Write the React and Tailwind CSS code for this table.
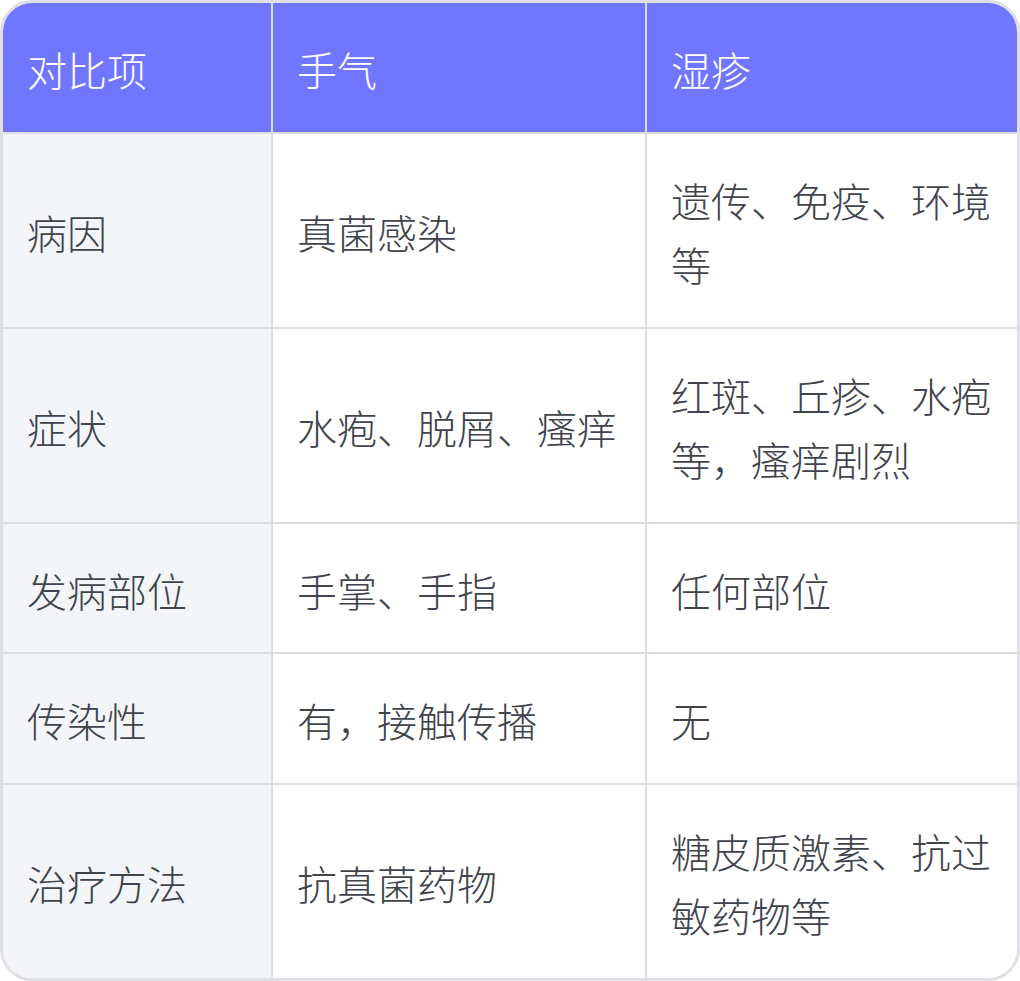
const headers = ['对比项', '手气', '湿疹']

const rows = [
    ['病因', '真菌感染', '遗传、免疫、环境等'],
    ['症状', '水疱、脱屑、瘙痒', '红斑、丘疹、水疱等，瘙痒剧烈'],
    ['发病部位', '手掌、手指', '任何部位'],
    ['传染性', '有，接触传播', '无'],
    ['治疗方法', '抗真菌药物', '糖皮质激素、抗过敏药物等']
]

const App = () => {
    return (
        <div
            className="w-[1020px] bg-white"
            style={{ fontFamily: '"Noto Sans CJK SC", "Noto Sans", sans-serif' }}
        >
            <div className="rounded-[32px] border-[3px] border-[#dfe0e5] overflow-hidden">
                <div className="grid grid-cols-[268px_372px_1fr] gap-[2px] bg-[#dcdde3] text-[40px] leading-[64.5px] font-light">
                    {headers.map((h) => (
                        <div key={h} className="bg-[#7076ff] text-white px-6 pt-[34px] pb-[30px] flex items-center">
                            {h}
                        </div>
                    ))}

                    {rows.map((row) => (
                        row.map((cell, i) => (
                            <div
                                key={row[0] + i}
                                className={`px-6 pt-[34px] pb-[30px] flex items-center text-[#40434c] ${i === 0 ? 'bg-[#f4f5f9]' : 'bg-white'}`}
                            >
                                {cell}
                            </div>
                        ))
                    ))}
                </div>
            </div>
        </div>
    )
}

export default App
